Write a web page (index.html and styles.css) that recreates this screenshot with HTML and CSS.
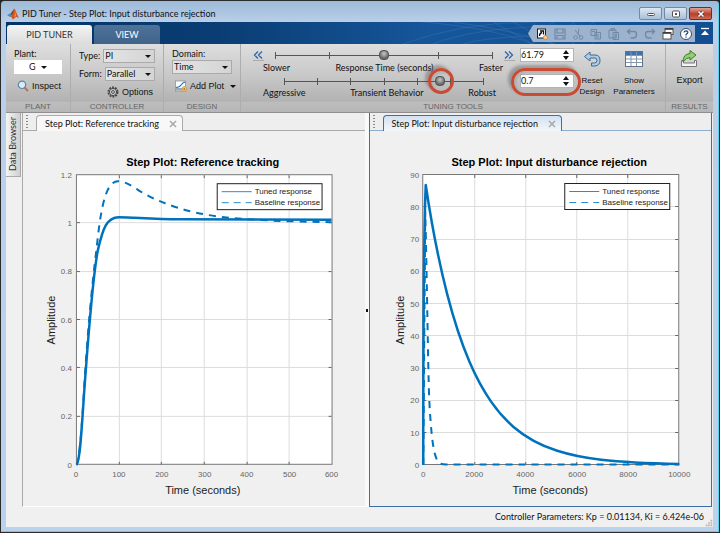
FILE: index.html
```
<!DOCTYPE html>
<html lang="en">
<head>
  <meta charset="UTF-8">
  <title>PID Tuner - Step Plot: Input disturbance rejection</title>
  <link rel="stylesheet" href="styles.css">
</head>
<body>
  <div class="window">
    <header class="titlebar">
      <svg class="logo" viewBox="0 0 12 12">
        <path d="M0 7 L4 5 L6 7 L3 9 Z" fill="#3f8fc4"/>
        <path d="M4 5 L7.5 0.5 L6.5 6 L5 8 Z" fill="#7a3b2a"/>
        <path d="M7.5 0.5 C9 3 10 7 12 10 C10 9 9 8.500 8 10 L5.500 11.500 C5 9 4 9 3 9 C5 8 6 5 7.500 0.500 Z" fill="#d9541e"/>
        <path d="M7.5 0.5 C8 3 8 6 7.5 9 L9 8 Z" fill="#f3a23a"/>
      </svg>
      <h1>PID Tuner - Step Plot: Input disturbance rejection</h1>
      <div class="win-buttons">
        <button aria-label="Minimize"><svg viewBox="0 0 10 8"><rect x="1.500" y="3.500" width="7" height="2" rx="1" fill="#fff" stroke="#555"/></svg></button>
        <button aria-label="Maximize"><svg viewBox="0 0 10 8"><rect x="1.500" y="1" width="7" height="6" rx="1" fill="#fff" stroke="#555"/><rect x="4" y="3" width="2" height="2" fill="#555"/></svg></button>
        <button class="close" aria-label="Close"><svg viewBox="0 0 10 8"><path d="M2.500 1.500 L7.500 6.500 M7.500 1.500 L2.500 6.500" stroke="#5a3030" stroke-width="3"/><path d="M2.500 1.500 L7.500 6.500 M7.500 1.500 L2.500 6.500" stroke="#fff" stroke-width="1.600"/></svg></button>
      </div>
    </header>

    <nav class="tabstrip">
      <svg class="mesh" viewBox="0 0 240 22" preserveAspectRatio="none">
        <path d="M0 22 Q60 0 130 0 M30 22 Q70 6 150 4 M60 22 Q100 10 240 14 M20 0 Q90 6 130 22 M50 0 Q110 8 150 22 M90 0 L130 22 M110 0 L150 22 M130 0 L150 22 M150 0 L170 22 M170 0 L190 22 M190 0 L210 22 M130 22 L150 0 M150 22 L170 0 M170 22 L190 0 M190 22 L210 0" fill="none" stroke="#5f93c6" stroke-width="0.500"/>
      </svg>
      <button class="tab active">PID TUNER</button>
      <button class="tab">VIEW</button>
      <div class="quick">
        <button aria-label="Shortcut"><svg viewBox="0 0 14 14"><rect x="2.500" y="2" width="8" height="9" fill="#fff" stroke="#222"/><path d="M4.500 9 Q4.500 6 7 5.500 M5 4 H8.500 V7.500" fill="none" stroke="#111" stroke-width="1.300"/><circle cx="10.500" cy="10.500" r="2.200" fill="#f4c88a" stroke="#c77f31" stroke-width="0.700"/></svg></button>
        <button aria-label="Save" disabled><svg viewBox="0 0 14 14"><path d="M2 2 H12 V12 H2 Z M4 2 V6 H10 V2 M4 12 V8.500 H10 V12" fill="none" stroke="#6f89a8" stroke-width="1.200"/></svg></button>
        <button aria-label="Cut" disabled><svg viewBox="0 0 14 14"><path d="M8 1.500 L7 8 M4 3 L9 9" stroke="#6f89a8" fill="none"/><circle cx="4.500" cy="10.500" r="1.800" fill="none" stroke="#6f89a8"/><circle cx="10" cy="10.500" r="1.800" fill="none" stroke="#6f89a8"/></svg></button>
        <button aria-label="Copy" disabled><svg viewBox="0 0 14 14"><path d="M2 2.500 H7.500 V8.500 H2 Z M6 5.500 H11.500 V12 H6 Z M3 4.500 H6 M7 8 H10 M7 10 H10" fill="#9bb0c9" stroke="#6f89a8"/></svg></button>
        <button aria-label="Paste" disabled><svg viewBox="0 0 14 14"><path d="M2 3 H9 V11 H2 Z M4 1.500 H7.500 V3.500 H4 Z M6 5.500 H11.500 V12.500 H6 Z M7 8 H10 M7 10 H10" fill="#9bb0c9" stroke="#6f89a8"/></svg></button>
        <button aria-label="Undo" disabled><svg viewBox="0 0 14 14"><path d="M5 2 L2.500 4.500 L5 7 M3 4.500 H9 Q11.500 4.500 11.500 7.500 Q11.500 11 8 11 H5.500" fill="none" stroke="#6f89a8" stroke-width="1.400"/></svg></button>
        <button aria-label="Redo" disabled><svg viewBox="0 0 14 14"><path d="M9 2 L11.500 4.500 L9 7 M11 4.500 H5 Q2.500 4.500 2.500 7.500 Q2.500 11 6 11 H8.500" fill="none" stroke="#6f89a8" stroke-width="1.400"/></svg></button>
        <button aria-label="Switch windows"><svg viewBox="0 0 14 14"><rect x="4" y="1.500" width="8" height="6" fill="#fff" stroke="#555"/><rect x="2" y="5.500" width="8" height="6.500" fill="#fff" stroke="#555"/><path d="M2 6 H10 M4 2 H12" stroke="#333" stroke-width="1.500"/></svg></button>
        <button aria-label="Help"><svg viewBox="0 0 14 14"><circle cx="7" cy="7" r="5.500" fill="#fff" stroke="#3a4c66"/><path d="M5 5.500 Q5.200 3.800 7 3.800 Q9 4 8.800 5.500 Q8.500 6.500 7 7.500 V8.500 M7 9.500 V10.800" fill="none" stroke="#234c86" stroke-width="1.300"/></svg></button>
      </div>
      <button class="collapse" aria-label="Collapse toolstrip"><svg viewBox="0 0 10 10"><path d="M1 1.500 H9" stroke="#fff" stroke-width="1.300"/><path d="M5 3.500 L9 8 H1 Z" fill="#fff"/></svg></button>
    </nav>

    <section class="ribbon">
      <div class="group plant">
        <div class="group-body">
          <span class="caption">Plant:</span>
          <button class="plant-pick">G <i class="arrow"></i></button>
          <button class="tool arial"><svg viewBox="0 0 12 12"><path d="M7.500 7.500 L11 11" stroke="#b5764a" stroke-width="2"/><circle cx="5" cy="4.800" r="3.700" fill="#d6ecfa" stroke="#5b83a8" stroke-width="1.200"/></svg>Inspect</button>
        </div>
        <h2>PLANT</h2>
      </div>

      <div class="group controller">
        <div class="group-body">
          <div class="field"><label for="type">Type:</label><span class="select"><select id="type"><option>PI</option></select></span></div>
          <div class="field"><label for="form">Form:</label><span class="select"><select id="form"><option>Parallel</option></select></span></div>
          <button class="tool arial options"><svg viewBox="0 0 12 12"><circle cx="6" cy="6" r="4.700" fill="none" stroke="#444" stroke-width="1.600" stroke-dasharray="1.900 1.050"/><circle cx="6" cy="6" r="3.600" fill="#ccc" stroke="#444"/><circle cx="6" cy="6" r="1.400" fill="#eee" stroke="#444"/></svg>Options</button>
        </div>
        <h2>CONTROLLER</h2>
      </div>

      <div class="group design">
        <div class="group-body">
          <label class="caption" for="domain">Domain:</label>
          <span class="select"><select id="domain"><option>Time</option></select></span>
          <button class="tool arial"><svg viewBox="0 0 12 12"><rect x="0.500" y="1" width="10" height="10" fill="#fff" stroke="#888" stroke-width="0.700"/><path d="M1 10.500 H11 V8 H1 Z" fill="#9aa7b4"/><path d="M1 7.500 Q5 7 6 5 Q8 2 10.500 2" fill="none" stroke="#2575c0" stroke-width="1.200"/><circle cx="9.300" cy="9" r="2.400" fill="#fbe2a8" stroke="#c98a2c" stroke-width="0.800"/><path d="M8 9 H10.600 M9.300 7.700 V10.300" stroke="#a9620e" stroke-width="0.800"/></svg>Add Plot<i class="arrow"></i></button>
        </div>
        <h2>DESIGN</h2>
      </div>

      <div class="group tuning">
        <div class="group-body">
          <div class="sliders">
            <div class="slider-row">
              <button class="nudge" aria-label="Slower range"><svg viewBox="0 0 10 10"><path d="M5 1.500 L1.500 5 L5 8.500 M9 1.500 L5.500 5 L9 8.500" fill="none" stroke="#2f67a8" stroke-width="1.300"/></svg></button>
              <div class="slider quarters"><input type="range" id="speed" min="0" max="100" value="50"></div>
              <button class="nudge" aria-label="Faster range"><svg viewBox="0 0 10 10"><path d="M1 1.500 L4.500 5 L1 8.500 M5 1.500 L8.500 5 L5 8.500" fill="none" stroke="#2f67a8" stroke-width="1.300"/></svg></button>
            </div>
            <div class="scale"><span>Slower</span><label for="speed">Response Time (seconds)</label><span>Faster</span></div>
            <div class="slider-row inner">
              <div class="slider sixths"><input type="range" id="behavior" min="0" max="100" value="78"><span class="ring knob-ring"></span></div>
            </div>
            <div class="scale low"><span>Aggressive</span><label for="behavior">Transient Behavior</label><span>Robust</span></div>
          </div>
          <div class="spinners">
            <div class="spinner"><input type="text" aria-label="Response time" value="61.79"><span><button class="up" aria-label="Increase response time"></button><button class="down" aria-label="Decrease response time"></button></span></div>
            <div class="spinner"><input type="text" aria-label="Transient behavior" value="0.7"><span><button class="up" aria-label="Increase transient behavior"></button><button class="down" aria-label="Decrease transient behavior"></button></span><i class="ring box-ring"></i></div>
          </div>
          <button class="big reset arial"><svg viewBox="0 0 20 20"><path d="M8 3 L2.500 7.500 L8 12 V9 H13 Q15 9 15 11.500 Q15 14 12.500 14 H9.500 V17 H13 Q18 16.500 18 11.500 Q18 6 13 6 H8 Z" fill="#a9cdec" stroke="#45688c"/></svg><span>Reset</span><span>Design</span></button>
          <button class="big show arial"><svg viewBox="0 0 20 20"><rect x="1.500" y="2.500" width="17" height="15" fill="#fff" stroke="#60738a"/><rect x="2" y="3" width="16" height="3.500" fill="#3f72ae"/><path d="M7 3 V17 M12.500 3 V17 M2 6.500 H18 M2 10 H18 M2 13.500 H18" stroke="#8497ad"/></svg><span>Show</span><span>Parameters</span></button>
        </div>
        <h2>TUNING TOOLS</h2>
      </div>

      <div class="group results">
        <div class="group-body">
          <button class="big arial"><svg viewBox="0 0 20 20"><path d="M2.500 11.500 V17.500 H17.500 V11.500 H15.500 V14 H4.500 V11.500 Z" fill="#f4f4f4" stroke="#777"/><path d="M4 13 Q4 5 11 4.500 V1.500 L17 6 L11 11 V8.500 Q7 8.500 4 13 Z" fill="#8fd16c" stroke="#3f7c2b"/></svg><span>Export</span></button>
        </div>
        <h2>RESULTS</h2>
      </div>
    </section>

    <main class="workspace">
      <aside class="rail"><button>Data Browser</button></aside>

      <section class="doc">
        <div class="doc-tabs">
          <span class="grip"></span>
          <div class="doc-tab">Step Plot: Reference tracking <button aria-label="Close tab"><svg viewBox="0 0 8 8"><path d="M1 1 L7 7 M7 1 L1 7" stroke="#aaa" stroke-width="1.600"/></svg></button></div>
          <span class="filler"></span>
        </div>
        <svg class="plot" viewBox="23 131 342 375">
          <rect class="area" x="76.500" y="174.500" width="256" height="290"/>
          <path class="grid" d="M119.500 175 V464 M161.500 175 V464 M204.500 175 V464 M247.500 175 V464 M289.500 175 V464 M77 222.500 H332 M77 271.500 H332 M77 319.500 H332 M77 367.500 H332 M77 416.500 H332"/>
          <path class="tick" d="M119.500 175 v3 m0 284 v3 M161.500 175 v3 m0 284 v3 M204.500 175 v3 m0 284 v3 M247.500 175 v3 m0 284 v3 M289.500 175 v3 m0 284 v3 M77 222.500 h3 m249 0 h3 M77 271.500 h3 m249 0 h3 M77 319.500 h3 m249 0 h3 M77 367.500 h3 m249 0 h3 M77 416.500 h3 m249 0 h3"/>
          <rect class="frame" x="76.500" y="174.500" width="256" height="290"/>
          <path class="curve dashed" d="M76.500 465 C79.500 463 82 425 84 392 C87 340 92 285 96.500 250 C100 218 104 181 118 181 C128 181 137 190 149 196 C165 204 190 213 220 216.500 C250 220 290 221.500 332 222"/>
          <path class="curve" d="M76.500 465 C80 463 82 425 84 396 C88 340 93 275 98 250 C103 228 107 217 119 217 C135 217 150 219 180 219 L332 219.500"/>
          <text class="plot-title" x="203" y="166">Step Plot: Reference tracking</text>
          <g class="y-labels">
            <text x="72" y="178">1.2</text><text x="72" y="226">1</text><text x="72" y="274">0.8</text><text x="72" y="323">0.6</text><text x="72" y="371">0.4</text><text x="72" y="419">0.2</text><text x="72" y="468">0</text>
          </g>
          <g class="x-labels">
            <text x="76" y="477">0</text><text x="119" y="477">100</text><text x="162" y="477">200</text><text x="205" y="477">300</text><text x="247" y="477">400</text><text x="290" y="477">500</text><text x="332" y="477">600</text>
          </g>
          <text class="axis" x="203" y="494">Time (seconds)</text>
          <text class="axis" transform="translate(55 320) rotate(-90)">Amplitude</text>
          <rect class="legend" x="217.500" y="183.500" width="105" height="26"/>
          <path class="key" d="M222 191.500 H252"/>
          <path class="key dashed" d="M222 202.500 H252"/>
          <text class="legend-text" x="255" y="194">Tuned response</text>
          <text class="legend-text" x="255" y="205">Baseline response</text>
        </svg>
      </section>

      <div class="splitter"></div>

      <section class="doc selected">
        <div class="doc-tabs">
          <span class="grip"></span>
          <div class="doc-tab">Step Plot: Input disturbance rejection <button aria-label="Close tab"><svg viewBox="0 0 8 8"><path d="M1 1 L7 7 M7 1 L1 7" stroke="#aaa" stroke-width="1.600"/></svg></button></div>
          <span class="filler"></span>
        </div>
        <svg class="plot" viewBox="370 131 341 375">
          <rect class="area" x="422.500" y="174.500" width="256" height="290"/>
          <path class="grid" d="M474.500 175 V464 M525.500 175 V464 M576.500 175 V464 M627.500 175 V464 M423 206.500 H678 M423 239.500 H678 M423 271.500 H678 M423 303.500 H678 M423 335.500 H678 M423 368.500 H678 M423 400.500 H678 M423 432.500 H678"/>
          <path class="tick" d="M474.500 175 v3 m0 284 v3 M525.500 175 v3 m0 284 v3 M576.500 175 v3 m0 284 v3 M627.500 175 v3 m0 284 v3 M423 206.500 h3 m249 0 h3 M423 239.500 h3 m249 0 h3 M423 271.500 h3 m249 0 h3 M423 303.500 h3 m249 0 h3 M423 335.500 h3 m249 0 h3 M423 368.500 h3 m249 0 h3 M423 400.500 h3 m249 0 h3 M423 432.500 h3 m249 0 h3"/>
          <rect class="frame" x="422.500" y="174.500" width="256" height="290"/>
          <path class="curve dashed" d="M423 465 L425 212 C427 290 427.500 360 429 400 C431 436 433 455 438 462 Q440 464.500 446 464.500 H679"/>
          <path class="curve" d="M423 465 C423 380 423.500 230 425.500 185 C432.300 230.900 439.700 266.100 447 294.400 C454.300 322.700 461.700 344.100 469 361.300 C476.300 378.500 483.700 391.400 491 401.900 C498.300 412.400 505.700 420.300 513 426.700 C527.700 439.400 542.300 446.100 557 450.800 C571.700 455.500 586.300 458.100 601 459.800 C627 462.800 653 463.500 679 464"/>
          <text class="plot-title" x="549" y="166">Step Plot: Input disturbance rejection</text>
          <g class="y-labels">
            <text x="419" y="178">90</text><text x="419" y="210">80</text><text x="419" y="242">70</text><text x="419" y="274">60</text><text x="419" y="307">50</text><text x="419" y="339">40</text><text x="419" y="371">30</text><text x="419" y="403">20</text><text x="419" y="436">10</text><text x="419" y="468">0</text>
          </g>
          <g class="x-labels">
            <text x="423" y="477">0</text><text x="474" y="477">2000</text><text x="525" y="477">4000</text><text x="577" y="477">6000</text><text x="628" y="477">8000</text><text x="679" y="477">10000</text>
          </g>
          <text class="axis" x="550" y="494">Time (seconds)</text>
          <text class="axis" transform="translate(404 320) rotate(-90)">Amplitude</text>
          <rect class="legend" x="564.500" y="183.500" width="105" height="26"/>
          <path class="key" d="M569 191.500 H599"/>
          <path class="key dashed" d="M569 202.500 H599"/>
          <text class="legend-text" x="602" y="194">Tuned response</text>
          <text class="legend-text" x="602" y="205">Baseline response</text>
        </svg>
      </section>
    </main>

    <footer class="status">Controller Parameters: Kp = 0.01134, Ki = 6.424e-06
      <svg viewBox="0 0 10 10"><path d="M8 1 v2 M8 4 v2 M8 7 v2 M5 4 v2 M5 7 v2 M2 7 v2" stroke="#b8b0a6" stroke-width="2"/></svg>
    </footer>
  </div>
</body>
</html>
```

FILE: styles.css
```
* {
  box-sizing: border-box;
}

body {
  margin: 0;
  background: #222;
  font-family: Lato, "Segoe UI", sans-serif;
  font-size: 9px;
  line-height: 12px;
  color: #111;
}

button, input, select {
  font: inherit;
  color: inherit;
  margin: 0;
  padding: 0;
  border: none;
  background: none;
}

h1, h2 {
  margin: 0;
  font-size: 9px;
  font-weight: normal;
}

.arial {
  font-family: "Liberation Sans", Arial, sans-serif;
}

.window {
  height: 100vh;
  display: flex;
  flex-direction: column;
  padding: 0 6px 5px 5px;
  border: 1px solid #2b2b2b;
  border-radius: 4px 4px 0 0;
  background: linear-gradient(#9cbad8, #bad0ea 22px, #bad2ec);
  box-shadow: inset -1px -1px 0 #5fd0ea;
}

/* title bar */
.titlebar {
  flex: 0 0 21px;
  display: flex;
  align-items: center;
  gap: 3px;
  padding-top: 4px;
}

.logo {
  width: 12px;
  height: 12px;
  margin-left: 1px;
}

.titlebar h1 {
  flex: 1;
}

.win-buttons {
  display: flex;
  gap: 2px;
  padding-right: 1px;
}

.win-buttons button {
  width: 23px;
  height: 13px;
  display: flex;
  align-items: center;
  justify-content: center;
  border: 1px solid #7688a0;
  border-radius: 2px;
  background: linear-gradient(#dde8f4, #a9bfd8);
}

.win-buttons .close {
  background: linear-gradient(#e0a496, #b93f2b 55%, #cf6a55);
  border-color: #6e2c2c;
}

.win-buttons svg {
  width: 10px;
  height: 8px;
}

/* toolstrip tabs */
.tabstrip {
  flex: 0 0 22px;
  position: relative;
  display: flex;
  align-items: flex-end;
  gap: 2px;
  padding-left: 1px;
  background: linear-gradient(90deg, #043465, #0a3d73 30%, #16569a 60%, #114f92);
}

.mesh {
  position: absolute;
  right: 70px;
  top: 0;
  width: 240px;
  height: 22px;
  opacity: 0.5;
}

.tab {
  width: 66px;
  height: 19px;
  border-radius: 3px 3px 0 0;
  background: linear-gradient(#4e7298, #3f638a);
  color: #fff;
}

.tab.active {
  width: 85px;
  background: linear-gradient(#f4f4f4, #dcdcdc);
  color: #333;
}

.quick {
  position: relative;
  display: flex;
  align-items: center;
  gap: 4px;
  height: 17px;
  margin: 0 0 2px auto;
  padding: 0 2px 0 7px;
  background: #9db3cd;
  clip-path: polygon(5px 0, 100% 0, 100% 100%, 5px 100%, 0 50%);
}

.quick button, .quick svg {
  display: block;
  width: 14px;
  height: 14px;
}

.collapse {
  width: 16px;
  height: 17px;
  margin-bottom: 2px;
}

.collapse svg {
  width: 10px;
  height: 10px;
}

/* ribbon */
.ribbon {
  flex: 0 0 69px;
  display: flex;
  background: linear-gradient(#dedede, #c6c6c6 50%, #b2b2b2 84%, #bdbdbd 86%, #b6b6b6);
  border-bottom: 1px solid #8f8f8f;
}

.group {
  display: flex;
  flex-direction: column;
  border-right: 1px solid #adadad;
}

.group:last-child {
  border-right: none;
}

.group h2 {
  flex: 0 0 11px;
  line-height: 11px;
  font-family: "Liberation Sans", Arial, sans-serif;
  font-size: 8px;
  text-align: center;
  color: #666;
}

.group-body {
  flex: 1;
  display: flex;
  flex-direction: column;
  min-height: 0;
}

.plant { width: 65px; }
.controller { width: 93px; }
.design { width: 77px; }
.tuning { flex: 1; }
.results { width: 47px; }

.plant .group-body, .design .group-body {
  padding: 4px 8px 0;
}

.plant-pick {
  width: 48px;
  height: 14px;
  margin-bottom: 5px;
  background: #fff;
}

.arrow {
  display: inline-block;
  margin-left: 3px;
  border: 3px solid transparent;
  border-top-color: #111;
  border-bottom: none;
  vertical-align: middle;
}

.tool {
  display: flex;
  align-items: center;
  gap: 3px;
  padding-left: 3px;
  height: 14px;
  white-space: nowrap;
}

.tool svg {
  flex: none;
  width: 12px;
  height: 12px;
}

.controller .group-body {
  gap: 4px;
  padding: 5px 8px 0;
}

.field {
  display: flex;
  align-items: center;
  justify-content: flex-end;
  gap: 3px;
}

.options {
  margin-left: 25px;
}

.select {
  position: relative;
  display: block;
  width: 52px;
  height: 14px;
  border: 1px solid #aaa;
  background: linear-gradient(90deg, #e4e4e4, #d4d4d4);
}

.select::after {
  content: "";
  position: absolute;
  right: 3px;
  top: 5px;
  border: 3px solid transparent;
  border-top-color: #111;
  border-bottom: none;
  pointer-events: none;
}

.select select {
  appearance: none;
  display: block;
  width: 100%;
  height: 12px;
  padding-left: 1px;
}

.design .select {
  width: 60px;
  margin-bottom: 5px;
}

/* tuning tools */
.tuning .group-body {
  flex-direction: row;
  padding: 4px 7px 0 12px;
}

.sliders {
  flex: 1;
}

.slider-row {
  display: flex;
  align-items: center;
  gap: 6px;
  height: 14px;
}

.slider-row.inner {
  height: 12px;
  padding: 0 26px;
}

.nudge {
  width: 11px;
  height: 11px;
  border-bottom: 1px solid #aaa;
}

.nudge svg {
  display: block;
  width: 10px;
  height: 10px;
}

.slider {
  position: relative;
  flex: 1;
  height: 11px;
  padding: 0 5px;
}

.slider::before {
  content: "";
  position: absolute;
  left: 5px;
  right: 5px;
  top: 2px;
  height: 7px;
  border-right: 1px solid #555;
  background: linear-gradient(#555, #555) 0 3px / 100% 1px no-repeat,
    repeating-linear-gradient(90deg, #555 0 1px, transparent 1px var(--step));
}

.quarters { --step: 25%; }
.sixths { --step: 16.667%; }

.slider input {
  appearance: none;
  position: relative;
  display: block;
  width: calc(100% + 10px);
  height: 11px;
  margin: 0 -5px;
}

.slider input::-webkit-slider-thumb {
  appearance: none;
  width: 10px;
  height: 10px;
  border: 1px solid #555;
  border-radius: 4px;
  background: radial-gradient(circle at 50% 35%, #c8c8c8, #666 70%);
}

.ring {
  position: absolute;
  border: 3px solid #c94b33;
  pointer-events: none;
  box-shadow: -3px -3px 3px rgba(80, 80, 80, 0.4), inset 2px 2px 3px rgba(80, 80, 80, 0.2);
}

.knob-ring {
  left: 77%;
  top: 50%;
  width: 26px;
  height: 26px;
  margin: -13px 0 0 -13px;
  border-radius: 50%;
}

.box-ring {
  inset: -7px -8px -9px -10px;
  border-radius: 15px;
}

.scale {
  display: flex;
  justify-content: space-between;
  padding: 0 12px 0 10px;
  height: 13px;
}

.scale.low {
  padding-right: 19px;
}

.spinners {
  width: 54px;
  display: flex;
  flex-direction: column;
  gap: 12px;
  margin-left: 5px;
}

.spinner {
  position: relative;
  display: flex;
  height: 14px;
  background: #fff;
  border: 1px solid #b4b4b4;
}

.spinner input {
  flex: 1;
  min-width: 0;
}

.spinner span {
  width: 10px;
  display: flex;
  flex-direction: column;
  justify-content: center;
  gap: 2px;
}

.spinner button {
  width: 0;
  height: 0;
  border: 3px solid transparent;
}

.spinner .up {
  border-top: none;
  border-bottom: 4px solid #111;
}

.spinner .down {
  border-bottom: none;
  border-top: 4px solid #111;
}

.big {
  display: flex;
  flex-direction: column;
  align-items: center;
  line-height: 11px;
}

.big svg {
  flex: none;
  width: 20px;
  height: 20px;
  margin: 1px 0 6px;
}

.reset {
  width: 36px;
  font-size: 8px;
}

.show {
  width: 48px;
  font-size: 8px;
}

.results .group-body {
  align-items: center;
  padding-top: 4px;
}

/* documents */
.workspace {
  flex: 1;
  display: flex;
  min-height: 0;
  background: #f0f0f0;
}

.rail {
  width: 16px;
}

.rail button {
  width: 15px;
  height: 64px;
  writing-mode: vertical-rl;
  transform: rotate(180deg);
  border-left: 1px solid #aaa;
  border-top: 1px solid #aaa;
  background: linear-gradient(90deg, #d0d0d0, #f4f4f4);
  color: #333;
}

.doc {
  flex: 1;
  display: flex;
  flex-direction: column;
  min-width: 0;
  border-left: 1px solid #aaa;
  border-bottom: 1px solid #fff;
}

.doc.selected {
  border: 1px solid #3c6ea8;
  border-top: none;
  margin-right: 1px;
}

.doc-tabs {
  flex: 0 0 18px;
  display: flex;
  padding-top: 2px;
  background: #eee;
}

.grip {
  width: 13px;
  border-bottom: 1px solid #aaa;
  background: radial-gradient(circle, #888 40%, transparent 50%) 3px 2px / 2px 3px repeat-y;
}

.doc-tab {
  display: flex;
  align-items: center;
  gap: 10px;
  padding: 0 5px 0 8px;
  border: 1px solid #aaa;
  border-bottom: none;
  border-radius: 4px 4px 0 0;
  background: #f8f8f8;
  white-space: nowrap;
}

.doc-tab button, .doc-tab svg {
  display: block;
  width: 8px;
  height: 8px;
}

.filler {
  flex: 1;
  border-bottom: 1px solid #aaa;
}

.selected .doc-tab {
  background: linear-gradient(#d3e2f1, #f2f6fa);
  border-color: #3c6ea8;
}

.selected .grip, .selected .filler {
  border-color: #8fafd0;
}

.splitter {
  width: 4px;
  background: linear-gradient(#111, #111) 1px 50% / 2px 3px no-repeat, #fafafa;
}

.plot {
  flex: 1;
  width: 100%;
  min-height: 0;
  font-family: "Liberation Sans", Arial, sans-serif;
}

.area { fill: #fff; }
.frame { fill: none; stroke: #777; }
.grid { fill: none; stroke: #dcdcdc; }
.tick { fill: none; stroke: #666; }

.curve {
  fill: none;
  stroke: #0072bd;
  stroke-width: 2.5;
  stroke-linejoin: round;
}

.curve.dashed {
  stroke-width: 2;
  stroke-dasharray: 7 6;
}

.plot-title {
  font-size: 11px;
  font-weight: bold;
  text-anchor: middle;
}

.axis {
  font-size: 11px;
  fill: #222;
  text-anchor: middle;
}

.x-labels, .y-labels {
  font-size: 8px;
  fill: #666;
  text-anchor: middle;
}

.y-labels {
  text-anchor: end;
}

.legend {
  fill: #fff;
  stroke: #222;
}

.legend-text {
  font-size: 8px;
  fill: #222;
}

.key {
  stroke: #2b8bd0;
}

.key.dashed {
  stroke-dasharray: 7 5;
}

.status {
  flex: 0 0 20px;
  display: flex;
  align-items: center;
  justify-content: flex-end;
  gap: 1px;
  background: #f0f0f0;
}

.status svg {
  width: 8px;
  height: 8px;
  align-self: flex-end;
}
```
